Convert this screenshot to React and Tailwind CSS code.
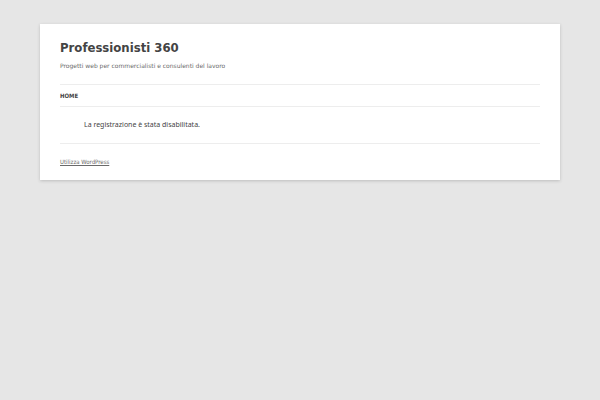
export default function App() {
  return (
    <div className="min-h-screen bg-[#e6e6e6] px-10 py-6 font-['DejaVu_Sans_Condensed','DejaVu_Sans',sans-serif] text-[#444]">
      <div className="bg-white px-5 shadow-[0_1px_3px_rgba(100,100,100,0.3)]">
        <header className="pt-4">
          <h1 className="text-[13px] leading-4 font-bold">
            <a href="#">Professionisti 360</a>
          </h1>
          <h2 className="mt-1 font-['DejaVu_Sans',sans-serif] text-[6px] leading-3 text-[#6a6a6a]">
            Progetti web per commercialisti e consulenti del lavoro
          </h2>
          <nav className="mt-3 border-y border-[#ededed] py-1">
            <a href="#" className="block text-[6px] leading-[13px] font-bold text-[#444]">HOME</a>
          </nav>
        </header>
        <main className="px-6 py-3">
          <p className="font-['Noto_Sans',sans-serif] text-[7px] leading-3">La registrazione è stata disabilitata.</p>
        </main>
        <footer className="border-t border-[#ededed] py-3">
          <a href="#" className="block text-[6px] leading-3 text-[#6a6a6a] underline">Utilizza WordPress</a>
        </footer>
      </div>
    </div>
  );
}
